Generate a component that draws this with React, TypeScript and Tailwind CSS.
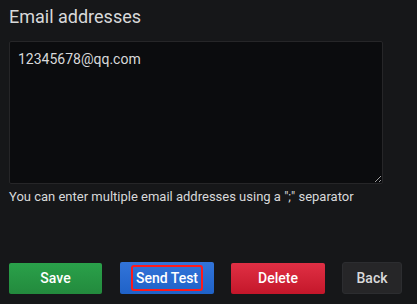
import React from "react";

export default function App() {
  return (
    <div className="w-[417px] h-[304px] bg-[#161719] text-[#d8d9da] font-['Roboto',_'Liberation_Sans',_sans-serif] pl-[9px] pt-[5px] overflow-hidden">
      {/* Section title */}
      <h3 className="text-[18px] leading-[24px] font-normal text-[#d8d9da]">Email addresses</h3>

      {/* Addresses field */}
      <textarea
        readOnly
        defaultValue="12345678@qq.com"
        className="mt-[12px] block w-[374px] h-[143px] bg-[#0b0c0e] border border-[#262628] rounded-[2px] px-[8px] py-[7px] text-[14px] leading-[20px] text-[#d8d9da] outline-none resize-y"
      />
      <p className="mt-[4px] text-[13px] leading-[18px] text-[#d8d9da]">
        You can enter multiple email addresses using a ";" separator
      </p>

      {/* Actions */}
      <div className="mt-[56px] flex items-center">
        <button className="w-[93px] h-[31px] rounded-[2px] bg-gradient-to-b from-[#2aa14a] to-[#238a3d] text-white text-[14px] font-medium">
          Save
        </button>
        <button className="ml-[18px] w-[94px] h-[32px] rounded-[2px] bg-gradient-to-b from-[#3274d9] to-[#1f62c8] text-white text-[14px] font-medium flex items-center justify-center">
          <span className="w-[72px] h-[26px] border-[2px] border-[#ff1a1a] rounded-[3px] flex items-center justify-center">
            Send Test
          </span>
        </button>
        <button className="ml-[17px] w-[94px] h-[31px] rounded-[2px] bg-gradient-to-b from-[#e02f44] to-[#c4162a] text-white text-[14px] font-medium">
          Delete
        </button>
        <button className="ml-[17px] w-[60px] h-[32px] rounded-[3px] bg-[#262628] border border-[#2c2d30] text-[#d8d9da] text-[14px] font-medium">
          Back
        </button>
      </div>
    </div>
  );
}
